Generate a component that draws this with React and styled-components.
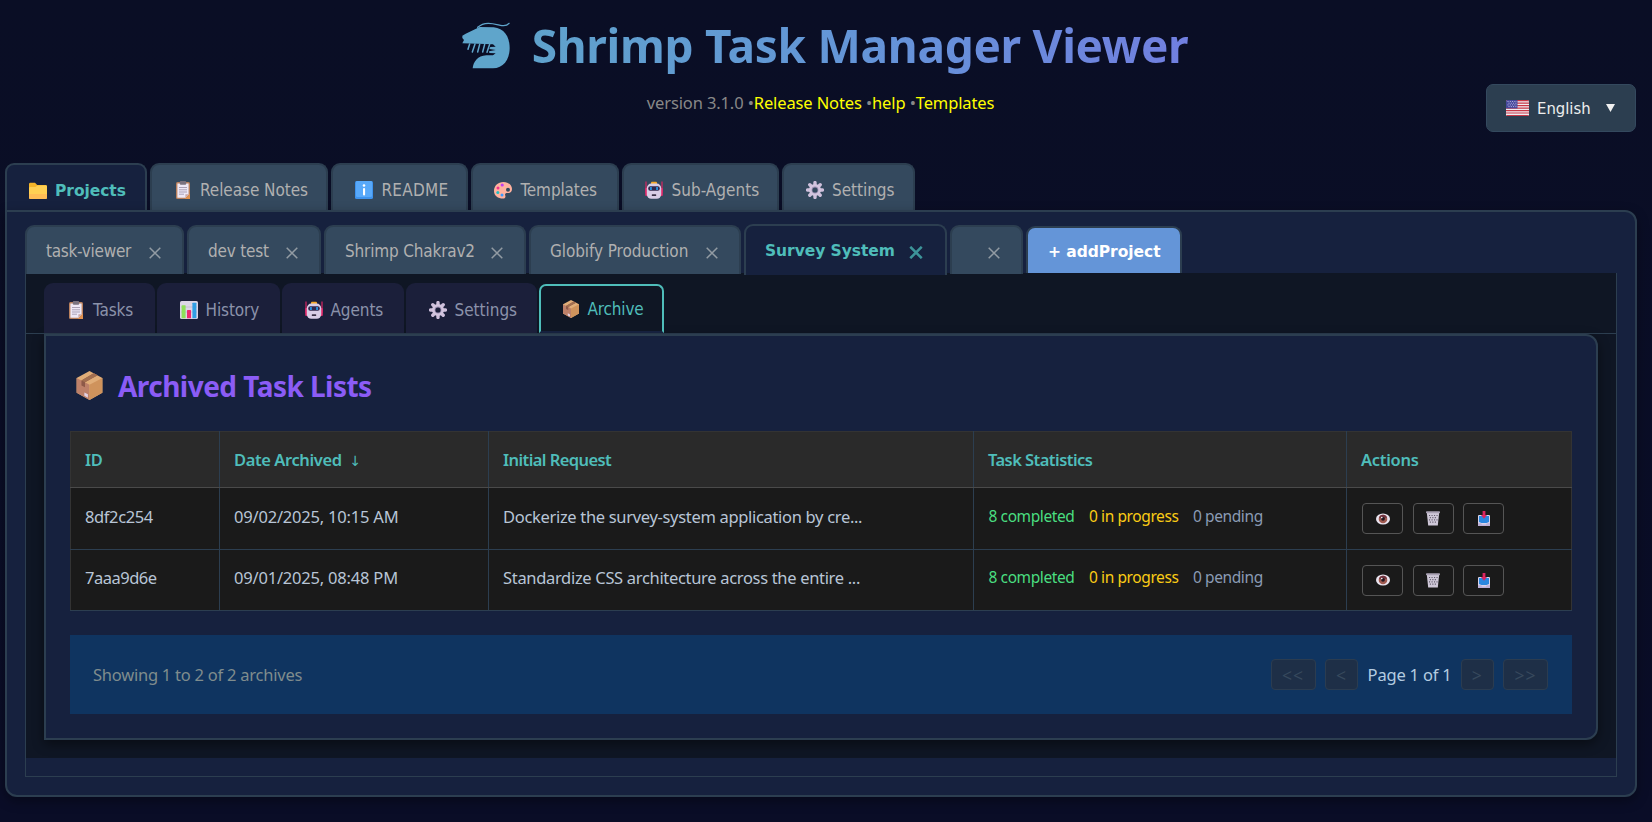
import React from "react";
import styled, { createGlobalStyle, css } from "styled-components";

const ui = '"Noto Sans", "Open Sans", sans-serif';
const tabFont = '"DejaVu Sans Condensed", "DejaVu Sans", sans-serif';
const line = "#2c3e50";
const teal = "#4fbdba";
const panel = "#16213e";

const Global = createGlobalStyle`
  * { box-sizing: border-box; }
  body {
    margin: 0;
    background: #0a0e27;
    font-family: ${ui};
    overflow: hidden;
  }
`;

const Page = styled.div`
  width: 1652px;
  height: 822px;
  padding: 6px 15px 0 5px;
  background: linear-gradient(180deg, #0a0e25 0%, #0a0d27 100%);
  display: flex;
  flex-direction: column;
`;

const TitleRow = styled.h1`
  margin: 0;
  height: 78px;
  padding-left: 8px;
  display: flex;
  justify-content: center;
  align-items: center;
  gap: 22px;
`;

const TitleText = styled.span`
  font-size: 46px;
  font-weight: 700;
  line-height: 78px;
  letter-spacing: -0.3px;
  white-space: nowrap;
  color: transparent;
  background: linear-gradient(90deg, #5fa2cc, #6495d8 50%, #717fe0);
  background-clip: text;
  -webkit-background-clip: text;
`;

const SubRow = styled.div`
  display: grid;
  grid-template-columns: 1fr auto 1fr;
  height: 48px;
  margin-bottom: 31px;
`;

const Version = styled.div`
  grid-column: 2;
  line-height: 37px;
  font-size: 16.5px;
  letter-spacing: -0.12px;
  color: #888;
  white-space: pre;
  padding-right: 1px;
  a { color: #ff0; }
`;

const Language = styled.button`
  justify-self: end;
  width: 150px;
  height: 48px;
  margin-right: 1px;
  padding: 0 20px 0 19px;
  display: flex;
  align-items: center;
  border: 1px solid #34495e;
  border-radius: 7px;
  background: ${line};
  color: #eee;
  font: 16.5px ${tabFont};
  svg:last-child { margin-left: auto; }
`;

const LanguageName = styled.span`
  margin-left: 8px;
`;

const TabBar = styled.nav`
  display: flex;
  align-items: ${(p) => p.$align || "stretch"};
  gap: ${(p) => p.$gap || 3}px;
  height: ${(p) => p.$h}px;
  padding-left: ${(p) => p.$indent || 0}px;
`;

const tabBase = css`
  display: flex;
  align-items: center;
  width: ${(p) => p.$w}px;
  border-radius: 9px 9px 0 0;
  font: 400 17px ${tabFont};
  letter-spacing: ${(p) => p.$ls ?? -0.1}px;
  white-space: nowrap;
`;

const boldTab = css`
  font: 700 15.5px "DejaVu Sans", sans-serif;
  letter-spacing: -0.05px;
`;

const MainTab = styled.div`
  ${tabBase}
  padding: 5px 0 0 ${(p) => p.$pad ?? 22}px;
  border: 2px solid ${line};
  border-bottom: 0;
  background: #34495e;
  color: #b0b0b0;
  svg { margin-right: 8px; }
  ${(p) => p.$active && css`
    padding-top: 6px;
    background: ${panel};
    color: ${teal};
    ${boldTab}
  `}
`;

const ProjectTab = styled.div`
  ${tabBase}
  height: 49px;
  margin-bottom: 1px;
  justify-content: space-between;
  padding: 0 21px 0 19px;
  border: 2px solid ${line};
  border-bottom: 0;
  background: #34495e;
  color: #b0b0b0;
  svg { margin-top: 4px; }
  ${(p) => p.$active && css`
    height: 51px;
    margin-bottom: 0;
    padding: 1px 22px 0 19px;
    background: ${panel};
    color: ${teal};
    ${boldTab}
    svg { margin-top: 2px; }
  `}
  ${(p) => p.$empty && css`
    justify-content: flex-end;
  `}
`;

const AddProject = styled.button`
  ${tabBase}
  ${boldTab}
  height: 47px;
  margin-bottom: 2px;
  padding: 2px 0 0 20px;
  border: 2px solid ${line};
  border-bottom: 0;
  background: #6495d8;
  color: #fff;
`;

const MainPanel = styled.main`
  height: 587px;
  padding: 12px 18px 0 18px;
  border: 2px solid ${line};
  border-radius: 0 12px 12px 12px;
  background: ${panel};
  box-shadow: 0 4px 12px rgba(0, 0, 0, 0.35);
`;

const ProjectBox = styled.section`
  margin-top: -2px;
  height: 504px;
  border: 1px solid ${line};
  border-top: 0;
  background: linear-gradient(#0f1624, #0f1624) no-repeat 0 0 / 100% 485px;
  padding-top: 10px;
`;

const SubTab = styled.div`
  ${tabBase}
  height: 50px;
  padding: 4px 0 0 23px;
  background: #1b1f3a;
  color: #8b92aa;
  svg { margin-right: 8px; }
  ${(p) => p.$active && css`
    height: 49px;
    margin-top: 1px;
    padding: 0 0 0 21px;
    border: 2px solid ${teal};
    border-bottom-color: ${panel};
    border-radius: 7px 7px 0 0;
    background: #0f1624;
    color: ${teal};
  `}
`;

const SubBar = styled(TabBar)`
  border-bottom: 1px solid ${line};
`;

const ArchivePanel = styled.section`
  margin: 0 18px;
  height: 406px;
  padding: 26px 24px 0;
  border: 2px solid ${line};
  border-radius: 0 12px 12px 0;
  background: ${panel};
  box-shadow: 0 4px 12px rgba(0, 0, 0, 0.45);
`;

const Heading = styled.h2`
  margin: 0 0 22px;
  height: 47px;
  padding: 0 0 0 5px;
  display: flex;
  align-items: center;
  gap: 14px;
  color: #8b5cf6;
  font-size: 28px;
  font-weight: 700;
  letter-spacing: -0.53px;
`;

const Table = styled.table`
  width: 1501px;
  table-layout: fixed;
  border-collapse: collapse;
  background: #1a1a1a;
  border: 1px solid #333;
`;

const HeadCell = styled.th`
  height: 56px;
  padding: 0 14px;
  border: 1px solid #333;
  border-left-color: ${(p) => (p.$first ? "#333" : line)};
  border-right-color: ${(p) => (p.$last ? "#333" : line)};
  border-bottom-color: #4a4a4a;
  background: #2a2a2a;
  color: ${teal};
  font-size: 16.5px;
  font-weight: 600;
  letter-spacing: ${(p) => p.$ls}px;
  text-align: left;
  white-space: pre;
`;

const Cell = styled.td`
  height: ${(p) => p.$h}px;
  padding: 0 14px ${(p) => p.$lift || 4}px;
  border-left: 1px solid ${(p) => (p.$first ? "#333" : line)};
  border-bottom: 1px solid ${line};
  color: #b8c5d6;
  font-size: 16.5px;
  letter-spacing: ${(p) => p.$ls || 0}px;
  white-space: nowrap;
`;

const Stats = styled.div`
  display: flex;
  gap: 14.5px;
  padding: 0 0 1px 0.5px;
  font-size: 15.5px;
  letter-spacing: -0.4px;
`;

const Stat = styled.span`
  color: ${(p) => p.$color};
`;

const Actions = styled.div`
  display: flex;
  gap: 9.5px;
  padding: 4px 0 0 1px;
`;

const ActionButton = styled.button`
  display: grid;
  place-items: center;
  width: 41px;
  height: 31px;
  padding: 0;
  border: 1px solid #555;
  border-radius: 4px;
  background: transparent;
`;

const Pagination = styled.footer`
  margin-top: 24px;
  width: 1502px;
  height: 79px;
  padding: 0 24px 0 23px;
  display: flex;
  align-items: center;
  justify-content: space-between;
  background: #0f3460;
  color: #7f8c8d;
  font-size: 16.5px;
  letter-spacing: -0.24px;
`;

const Pager = styled.div`
  display: flex;
  align-items: center;
  gap: 9.5px;
`;

const PageLabel = styled.span`
  color: #b4cce0;
  letter-spacing: -0.2px;
`;

const PageButton = styled.button`
  width: ${(p) => p.$w}px;
  height: 31px;
  padding: 0;
  border: 1px solid #2b3c50;
  border-radius: 4px;
  background: #1e2f47;
  color: #37495d;
  font: 17.5px ${ui};
  letter-spacing: 1px;
`;

const svgProps = (s) => ({ width: s, height: s, viewBox: "0 0 18 18", "aria-hidden": true });

const Shrimp = () => (
  <svg width="48" height="47" viewBox="65 70 144 141" fill="#5fa5cb">
    <path d="M66 111 L76 105 L118 85 L160 86 C190 89 208 112 208 148 C208 184 188 209 158 209 L97 209 C99 190 112 171 138 170 L158 170 L166 164 L147 163 L146 158 L166 154 L147 151 L150 145 L166 144 L158 137 L66 134 L71 124 L66 118 Z" />
    <path d="M88 136L83 152M104 136L96 160M118 137L112 160M133 137L127 160M148 137L140 161" stroke="#5fa5cb" strokeWidth="4.5" fill="none" strokeLinecap="round" />
    <path d="M112 86C134 66 162 76 180 80C194 83 202 79 206 74" stroke="#5fa5cb" strokeWidth="4" fill="none" strokeLinecap="round" />
  </svg>
);

const Folder = () => (
  <svg {...svgProps(18)}>
    <path d="M0 2.2Q0 .8 1.4.8H6L8.2 3H16.6Q18 3 18 4.4V15.6Q18 17 16.6 17H1.4Q0 17 0 15.6Z" fill="#f5b52a" />
    <path d="M0 6.2Q0 5 1.2 5H6.4L8.4 3.4H16.8Q18 3.4 18 4.6V15.6Q18 17 16.6 17H1.4Q0 17 0 15.6Z" fill="#ffd053" />
    <path d="M0 12H18V15.6Q18 17 16.6 17H1.4Q0 17 0 15.6Z" fill="#ffbd55" />
  </svg>
);

const Clipboard = () => (
  <svg {...svgProps(18)}>
    <rect x="2" y="1" width="14" height="17" rx="1.5" fill="#b9805d" />
    <path d="M3.4 2.4H14.6V13.5L11.6 16.7H3.4Z" fill="#eee8f6" />
    <path d="M14.6 13.3L11.4 16.7V13.3Z" fill="#c9a7a5" />
    <path d="M16 12.5V18H10.8Z" fill="#e0914f" />
    <rect x="5.8" y="0" width="6.4" height="3.8" rx="1" fill="#7a727f" />
    <path d="M5 6.5H13M5 8.8H13M5 11H13M5 13.2H10" stroke="#aaa1b7" strokeWidth="1" />
  </svg>
);

const Info = () => (
  <svg {...svgProps(18)}>
    <rect width="18" height="18" rx="1.6" fill="#3e93ee" />
    <rect x="1" width="16" height="16" rx="1.3" fill="#58a9fa" />
    <circle cx="9" cy="4.5" r="1.3" fill="#fff" />
    <rect x="8" y="7" width="2.1" height="7.6" rx="1" fill="#fff" />
  </svg>
);

const Palette = () => (
  <svg {...svgProps(18)}>
    <path d="M0 10C0 4.8 4 1 9.5 1C14.6 1 18 4.3 18 8C18 10.7 16.2 12.2 14 12C11.9 11.8 10.6 12.6 11.2 14.2C11.9 16 11.2 17.6 9 17.6C4 17.6 0 14.8 0 10Z" fill="#ffb29f" />
    <circle cx="14" cy="8.7" r="2" fill="#34495e" />
    <circle cx="8.2" cy="4" r="1.6" fill="#c43df0" />
    <circle cx="4" cy="7" r="1.5" fill="#f2328c" />
    <circle cx="3.8" cy="11.6" r="1.5" fill="#20bfc4" />
    <circle cx="8" cy="14" r="1.5" fill="#3b9bff" />
  </svg>
);

const Robot = () => (
  <svg {...svgProps(18)}>
    <path d="M1 .4V12M17 .4V12" stroke="#da2461" strokeWidth="1.2" />
    <rect x=".2" y="7" width="2.4" height="8" rx="1" fill="#e22b6d" />
    <rect x="15.4" y="7" width="2.4" height="8" rx="1" fill="#e22b6d" />
    <rect x="6" y=".8" width="6" height="3" rx="1" fill="#f7a928" />
    <rect x="1.8" y="2.6" width="14.4" height="15.2" rx="4.5" fill="#d9cde6" />
    <rect x="3.2" y="5.2" width="11.6" height="4.6" rx="2" fill="#31284d" />
    <rect x="5.2" y="6" width="1.5" height="3" fill="#25a8ff" />
    <rect x="11.3" y="6" width="1.5" height="3" fill="#25a8ff" />
    <rect x="6.8" y="13.2" width="4.4" height="1.8" rx=".5" fill="#3c3248" />
  </svg>
);

const Gear = ({ hole = "#34495e" }) => (
  <svg {...svgProps(18)}>
    <path d="M9 1.6V16.4M1.6 9H16.4M3.8 3.8L14.2 14.2M14.2 3.8L3.8 14.2" stroke="#cfc0dc" strokeWidth="3.4" strokeLinecap="round" />
    <circle cx="9" cy="9" r="6" fill="#d3c5df" />
    <circle cx="9" cy="9" r="3.4" fill="#9d90b3" />
    <circle cx="9" cy="9" r="2.6" fill={hole} />
  </svg>
);

const SubGear = () => <Gear hole="#1b1f3a" />;

const Chart = () => (
  <svg {...svgProps(18)}>
    <rect width="18" height="18" rx="1.6" fill="#dcd6e6" />
    <path d="M1 6H17M1 11H17" stroke="#c0b7cd" strokeWidth=".8" />
    <rect x="1.6" y="4.2" width="4" height="13" rx=".5" fill="#8fe05a" />
    <rect x="7" y="9" width="4" height="8.2" rx=".5" fill="#ef2a70" />
    <rect x="12.4" y="1.8" width="4" height="15.4" rx=".5" fill="#319fe4" />
  </svg>
);

const Box = ({ size = 18 }) => (
  <svg {...svgProps(size)}>
    <path d="M9 0L17 4.3V13.5L9 18L1 13.5V4.3Z" fill="#e0ad78" />
    <path d="M1 4.3L9 8.6V18L1 13.5Z" fill="#bd8069" />
    <path d="M17 4.3L9 8.6V18L17 13.5Z" fill="#cf935c" />
    <path d="M11.6 1.4L4 5.9V9L6.2 10.1V7L14 2.7Z" fill="#8d5948" />
    <path d="M11.6 1.4L14 2.7L6.2 7L4 5.9Z" fill="#a26f50" />
    <path d="M5.8 13.3L8 14.5V16.6L5.8 15.4Z" fill="#e3d2e4" />
  </svg>
);

const Flag = () => (
  <svg width="23" height="16" viewBox="0 0 23 16">
    <defs><clipPath id="flag"><rect width="23" height="16" rx="1.6" /></clipPath></defs>
    <g clipPath="url(#flag)">
      <rect width="23" height="16" fill="#efedf2" />
      <path d="M0 .6H23M0 3.2H23M0 5.7H23M0 8.2H23M0 10.6H23M0 13H23M0 15.5H23" stroke="#c83746" strokeWidth="1.2" />
      <rect width="11.5" height="8.4" fill="#46489c" />
      <path d="M1.5 1.5H11M2.5 3.2H11M1.5 4.9H11M2.5 6.6H11" stroke="#c5c5e8" strokeWidth=".9" strokeDasharray="1 1.3" />
    </g>
  </svg>
);

const Arrow = () => (
  <svg width="9" height="8" viewBox="0 0 9 8"><path d="M0 0H9L4.5 8Z" fill="#f0f0f0" /></svg>
);

const Close = ({ active }) => (
  <svg width={active ? 14 : 12} height={active ? 13 : 12} viewBox="0 0 12 12">
    <path d="M.7.7L11.3 11.3M11.3.7L.7 11.3" stroke={active ? "#3d9499" : "#929ba3"} strokeWidth={active ? 2.3 : 1.5} />
  </svg>
);

const Eye = () => (
  <svg width="14" height="12" viewBox="0 0 14 12">
    <ellipse cx="7" cy="6" rx="7" ry="5.6" fill="#e9e3ee" />
    <circle cx="7" cy="6" r="4.3" fill="#a05a50" />
    <path d="M2.9 4.8A4.3 4.3 0 0 1 11.1 4.8" fill="#70333f" />
    <circle cx="7" cy="5.8" r="1.9" fill="#241721" />
    <circle cx="5.8" cy="4.6" r=".8" fill="#fff" />
  </svg>
);

const Trash = () => (
  <svg width="14" height="15" viewBox="0 0 14 15">
    <path d="M.8 1.5H13.2L11.8 14.5H2.2Z" fill="#cfc8d8" />
    <rect x="0" y=".3" width="14" height="2" rx=".8" fill="#aaa2b4" />
    <path d="M3 4.5H12M3.8 6.7H11M3 8.9H11.5M3.8 11.1H11" stroke="#615a6b" strokeWidth="1.2" strokeDasharray="1.1 1.4" />
  </svg>
);

const Restore = () => (
  <svg width="12" height="15" viewBox="0 0 12 15">
    <rect y="4" width="12" height="11" rx="1" fill="#d8d3ea" />
    <path d="M1 5H11V11L8.5 12H3.5L1 11Z" fill="#2986df" />
    <path d="M0 12.3H3L4.2 13.4H7.8L9 12.3H12V15H0Z" fill="#bdb0d6" />
    <path d="M4.6 0H7.4V4H9L6 7.8L3 4H4.6Z" fill="#dc2460" />
  </svg>
);

const mainTabs = [
  { label: "Projects", icon: Folder, w: 142, active: true },
  { label: "Release Notes", icon: Clipboard, w: 178.4, ls: -0.06 },
  { label: "README", icon: Info, w: 136.6, ls: 0.3 },
  { label: "Templates", icon: Palette, w: 148, ls: -0.12, pad: 21.5 },
  { label: "Sub-Agents", icon: Robot, w: 157, ls: 0.02, pad: 21.5 },
  { label: "Settings", icon: Gear, w: 133, ls: -0.03 },
];

const projects = [
  { label: "task-viewer", w: 159, ls: -0.28 },
  { label: "dev test", w: 134, ls: -0.2 },
  { label: "Shrimp Chakrav2", w: 202, ls: -0.17 },
  { label: "Globify Production", w: 212, ls: -0.08 },
  { label: "Survey System", w: 203, active: true },
  { label: "", w: 73 },
];

const subTabs = [
  { label: "Tasks", icon: Clipboard, w: 110.5, ls: -0.1 },
  { label: "History", icon: Chart, w: 123, ls: -0.1 },
  { label: "Agents", icon: Robot, w: 122, ls: -0.1 },
  { label: "Settings", icon: SubGear, w: 131, ls: -0.03 },
  { label: "Archive", icon: Box, w: 125, ls: -0.15, active: true },
];

const columns = [
  { label: "ID", w: 149, ls: -0.3 },
  { label: "Date Archived", w: 269, ls: -0.4, sorted: true },
  { label: "Initial Request", w: 485, ls: -0.58 },
  { label: "Task Statistics", w: 373, ls: -0.55 },
  { label: "Actions", w: 225, ls: -0.3 },
];

const archives = [
  { id: "8df2c254", date: "09/02/2025, 10:15 AM", request: "Dockerize the survey-system application by cre...", h: 62, idLs: -0.38, lift: 4 },
  { id: "7aaa9d6e", date: "09/01/2025, 08:48 PM", request: "Standardize CSS architecture across the entire ...", h: 61, idLs: -0.5, lift: 5 },
];

const SortMark = styled.span`
  margin-left: 8px;
  font-family: "DejaVu Sans", sans-serif;
  font-size: 14px;
  font-weight: 400;
`;

export default function App() {
  return (
    <Page>
      <Global />
      <TitleRow>
        <Shrimp />
        <TitleText>Shrimp Task Manager Viewer</TitleText>
      </TitleRow>
      <SubRow>
        <Version>version 3.1.0 •<a>Release Notes</a> •<a>help</a> •<a>Templates</a></Version>
        <Language>
          <Flag />
          <LanguageName>English</LanguageName>
          <Arrow />
        </Language>
      </SubRow>

      <TabBar $h={47}>
        {mainTabs.map(({ label, icon: Icon, w, ls, active, pad }) => (
          <MainTab key={label} $w={w} $ls={ls} $active={active} $pad={pad}>
            <Icon />{label}
          </MainTab>
        ))}
      </TabBar>
      <MainPanel>
        <TabBar $h={51} $align="flex-end">
          {projects.map(({ label, w, ls, active }) => (
            <ProjectTab key={label} $w={w} $ls={ls} $active={active} $empty={!label}>
              {label}<Close active={active} />
            </ProjectTab>
          ))}
          <AddProject $w={156}>+ addProject</AddProject>
        </TabBar>
        <ProjectBox>
          <SubBar $h={51} $gap={2} $indent={18}>
            {subTabs.map(({ label, icon: Icon, w, ls, active }) => (
              <SubTab key={label} $w={w} $ls={ls} $active={active}>
                <Icon />{label}
              </SubTab>
            ))}
          </SubBar>
          <ArchivePanel>
            <Heading><Box size={29} />Archived Task Lists</Heading>
            <Table>
              <colgroup>
                {columns.map((c) => <col key={c.label} width={c.w} />)}
              </colgroup>
              <thead>
                <tr>
                  {columns.map((c, i) => (
                    <HeadCell key={c.label} $ls={c.ls} $first={i === 0} $last={i === columns.length - 1}>
                      {c.label}{c.sorted && <SortMark>↓</SortMark>}
                    </HeadCell>
                  ))}
                </tr>
              </thead>
              <tbody>
                {archives.map((a) => (
                  <tr key={a.id}>
                    <Cell $h={a.h} $lift={a.lift} $first $ls={a.idLs}>{a.id}</Cell>
                    <Cell $lift={a.lift} $ls={-0.2}>{a.date}</Cell>
                    <Cell $lift={a.lift} $ls={-0.32}>{a.request}</Cell>
                    <Cell $lift={a.lift}>
                      <Stats>
                        <Stat $color="#4ade80">8 completed</Stat>
                        <Stat $color="#facc15">0 in progress</Stat>
                        <Stat $color="#8b9bb4">0 pending</Stat>
                      </Stats>
                    </Cell>
                    <Cell>
                      <Actions>
                        <ActionButton><Eye /></ActionButton>
                        <ActionButton><Trash /></ActionButton>
                        <ActionButton><Restore /></ActionButton>
                      </Actions>
                    </Cell>
                  </tr>
                ))}
              </tbody>
            </Table>
            <Pagination>
              <span>Showing 1 to 2 of 2 archives</span>
              <Pager>
                <PageButton $w={45}>&lt;&lt;</PageButton>
                <PageButton $w={33}>&lt;</PageButton>
                <PageLabel>Page 1 of 1</PageLabel>
                <PageButton $w={32.5}>&gt;</PageButton>
                <PageButton $w={45}>&gt;&gt;</PageButton>
              </Pager>
            </Pagination>
          </ArchivePanel>
        </ProjectBox>
      </MainPanel>
    </Page>
  );
}
